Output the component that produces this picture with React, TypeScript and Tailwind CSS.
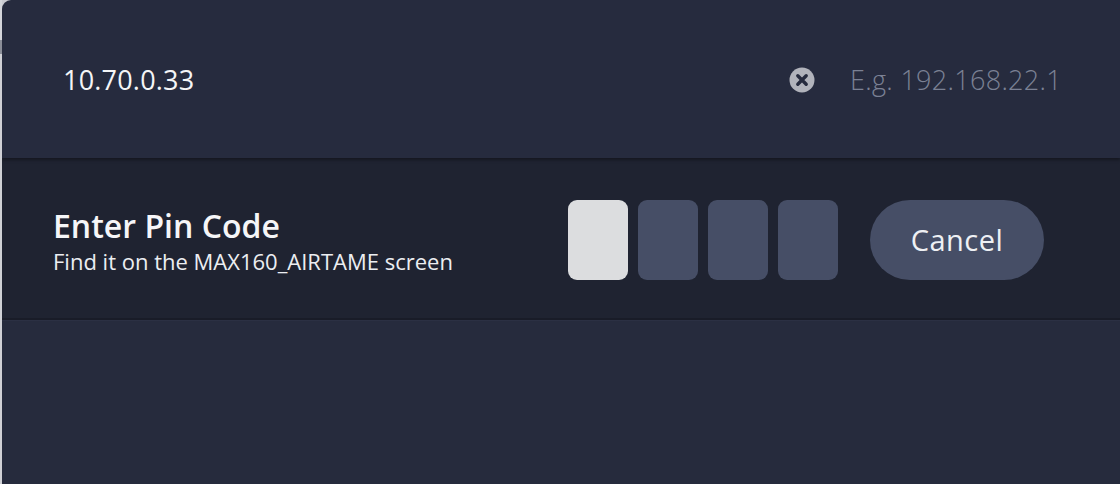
import React from 'react';

const PinBox: React.FC<{ active?: boolean }> = ({ active }) => (
  <div className={`w-[60px] h-[80px] rounded-[9px] ${active ? 'bg-[#dcdddf]' : 'bg-[#464e66]'}`} />
);

const App: React.FC = () => {
  const pins = [true, false, false, false];

  return (
    <div className="w-[1120px] h-[484px] flex bg-[#c9cad0] overflow-hidden" style={{ fontFamily: '"Open Sans", "Noto Sans", sans-serif' }}>
      <div className="w-[2px] flex flex-col">
        <div className="h-[40px] bg-[#d4d5da]" />
        <div className="h-[14px] bg-[#8b8e98]" />
        <div className="flex-1 bg-[#cfd0d5]" />
      </div>
      <div className="flex-1 flex flex-col rounded-tl-[9px] overflow-hidden bg-[#262b3e]">
        <div className="h-[158px] flex items-center pl-[61px] pr-[58px] pt-[2px] shadow-[0_2px_3px_rgba(0,0,0,0.35)] z-10 relative">
          <div className="flex-1 text-[27px] text-[#f4f5f7] tracking-[0.2px]">10.70.0.33</div>
          <svg width="26" height="26" viewBox="0 0 26 26" className="mr-[35px]">
            <circle cx="13" cy="13" r="12.5" fill="#b1b3bb" />
            <path d="M8.8 8.8 L17.2 17.2 M17.2 8.8 L8.8 17.2" stroke="#262b3e" strokeWidth="3.4" strokeLinecap="round" />
          </svg>
          <div className="text-[27px] font-light text-[#7b8194] tracking-[0.3px]">E.g. 192.168.22.1</div>
        </div>
        <div className="h-[162px] flex items-center bg-[#1f2331] pl-[51px] pt-[4px] border-b-2 border-[#191c28]">
          <div className="flex-1 flex flex-col">
            <div className="text-[32px] font-semibold text-[#f6f6f8] leading-[40px]">Enter Pin Code</div>
            <div className="text-[22px] text-[#eceef2] leading-[28px] mt-[1px]">Find it on the MAX160_AIRTAME screen</div>
          </div>
          <div className="flex gap-[10px]">
            {pins.map((a, i) => (
              <PinBox key={i} active={a} />
            ))}
          </div>
          <button className="ml-[32px] mr-[76px] w-[174px] h-[80px] rounded-full bg-[#464e66] text-[29px] text-[#eef0f4] tracking-[0.5px]">
            Cancel
          </button>
        </div>
        <div className="flex-1 bg-[#262b3d] border-t border-[#2b3043]" />
      </div>
    </div>
  );
};

export default App;
